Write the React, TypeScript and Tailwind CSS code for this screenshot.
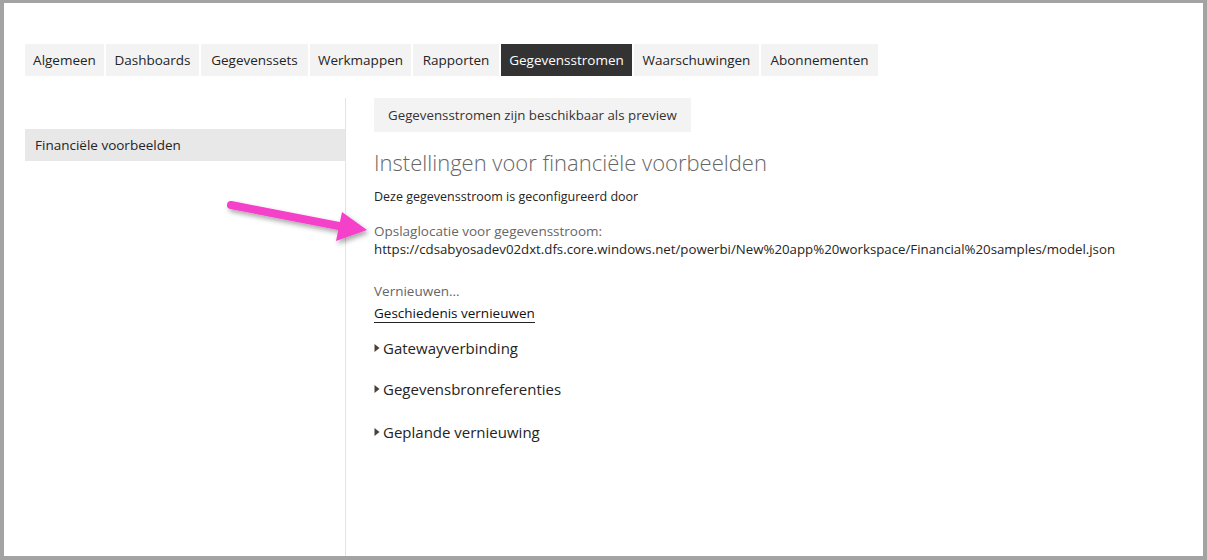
const TABS = [
  { label: "Algemeen", w: "w-[79px]" },
  { label: "Dashboards", w: "w-[93px]" },
  { label: "Gegevenssets", w: "w-[107px]" },
  { label: "Werkmappen", w: "w-[101px]" },
  { label: "Rapporten", w: "w-[86px]" },
  { label: "Gegevensstromen", w: "w-[131px]" },
  { label: "Waarschuwingen", w: "w-[125px]" },
  { label: "Abonnementen", w: "w-[117px]" },
];

const SECTIONS = [
  { label: "Gatewayverbinding", mt: "mt-[13px]" },
  { label: "Gegevensbronreferenties", mt: "mt-[19px]" },
  { label: "Geplande vernieuwing", mt: "mt-[21px]" },
];

function Caret() {
  return (
    <svg width="6" height="10" viewBox="0 0 6 10" className="mr-[3px] shrink-0">
      <path d="M0.5 1 L5.5 5 L0.5 9 Z" fill="#4a4038" />
    </svg>
  );
}

function Arrow() {
  return (
    <svg
      className="pointer-events-none absolute left-[215px] top-[188px]"
      width="170"
      height="70"
      viewBox="0 0 170 70"
    >
      <defs>
        <filter id="sh" x="-20%" y="-40%" width="140%" height="180%">
          <feDropShadow dx="2" dy="3" stdDeviation="2.5" floodColor="#000" floodOpacity="0.35" />
        </filter>
      </defs>
      <g filter="url(#sh)">
        <line x1="12" y1="14" x2="125" y2="36" stroke="#f53fc9" strokeWidth="8" strokeLinecap="round" />
        <path d="M123 21 L148 39 L117 50 Z" fill="#f53fc9" />
      </g>
    </svg>
  );
}

export default function App() {
  return (
    <div
      className="h-[560px] w-[1207px] bg-[#a3a3a3] pb-[4px] pl-[4px] pr-[4px] pt-[3px]"
      style={{ fontFamily: '"Open Sans", "Noto Sans", sans-serif' }}
    >
      <div className="relative flex h-full flex-col bg-white">
        <div className="mt-[41px] flex gap-[2px] pl-[21px]">
          {TABS.map((t) => (
            <div
              key={t.label}
              className={`flex h-[32px] ${t.w} items-center justify-center pt-[1px] text-[13.5px] ${
                t.label === "Gegevensstromen"
                  ? "bg-[#333333] text-white"
                  : "bg-[#f3f3f3] text-[#252423]"
              }`}
            >
              {t.label}
            </div>
          ))}
        </div>

        <div className="mt-[22px] flex flex-1">
          <div className="w-[342px] border-r border-[#e4e4e4] pl-[21px]">
            <div className="mt-[31px] flex h-[32px] items-center bg-[#e8e8e8] pl-[10px] text-[13.5px] text-[#252423]">
              Financiële voorbeelden
            </div>
          </div>

          <div className="pl-[28px] text-[#252423]">
            <div className="inline-flex h-[34px] items-center bg-[#f3f3f3] px-[14px] pt-[1px] text-[13.3px] text-[#333]">
              Gegevensstromen zijn beschikbaar als preview
            </div>
            <div className="mt-[16px] text-[22px] font-light leading-[28px] text-[#666]">
              Instellingen voor financiële voorbeelden
            </div>
            <div className="mt-[12px] text-[12.5px] leading-[18px]">
              Deze gegevensstroom is geconfigureerd door
            </div>
            <div className="mt-[16px] text-[13.5px] leading-[18px] text-[#666]">
              Opslaglocatie voor gegevensstroom:
            </div>
            <div className="text-[13.25px] leading-[18px]">
              https://cdsabyosadev02dxt.dfs.core.windows.net/powerbi/New%20app%20workspace/Financial%20samples/model.json
            </div>
            <div className="mt-[24px] text-[13.5px] leading-[18px] text-[#666]">Vernieuwen...</div>
            <div className="-mt-[1px] inline-block border-b border-[#252423] text-[13.5px] leading-[17px] text-[#111]">
              Geschiedenis vernieuwen
            </div>
            {SECTIONS.map((s) => (
              <div key={s.label} className={`${s.mt} flex items-center text-[15px] leading-[22px] text-[#252423]`}>
                <Caret />
                {s.label}
              </div>
            ))}
          </div>
        </div>

        <Arrow />
      </div>
    </div>
  );
}
